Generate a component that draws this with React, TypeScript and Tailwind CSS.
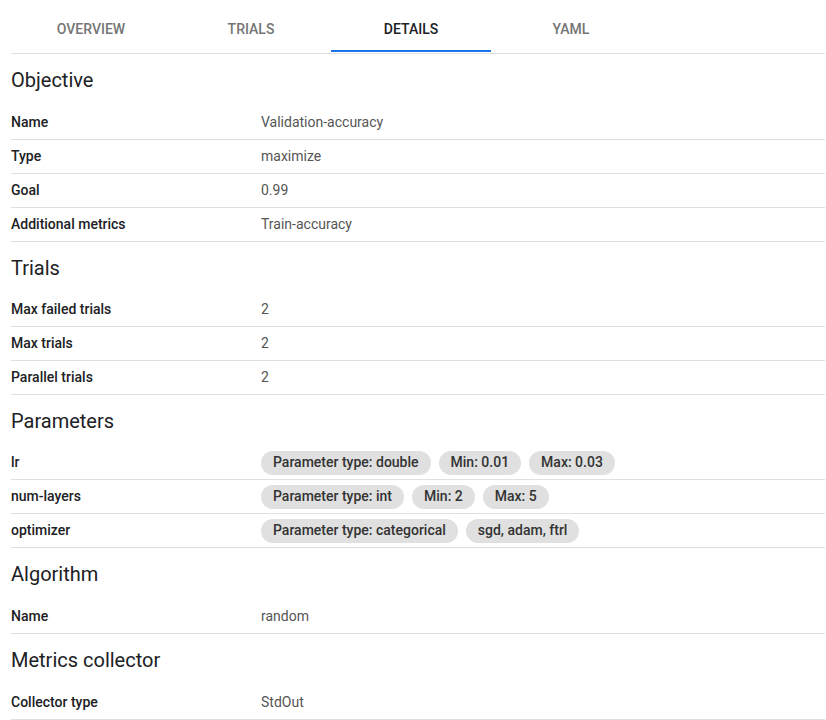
import React from "react";

type Row = { label: string; value?: string; chips?: string[] };
type Section = { title: string; h: string; rows: Row[] };

const sections: Section[] = [
  {
    title: "Objective",
    h: "h-[52px]",
    rows: [
      { label: "Name", value: "Validation-accuracy" },
      { label: "Type", value: "maximize" },
      { label: "Goal", value: "0.99" },
      { label: "Additional metrics", value: "Train-accuracy" },
    ],
  },
  {
    title: "Trials",
    h: "h-[51px]",
    rows: [
      { label: "Max failed trials", value: "2" },
      { label: "Max trials", value: "2" },
      { label: "Parallel trials", value: "2" },
    ],
  },
  {
    title: "Parameters",
    h: "h-[51px]",
    rows: [
      { label: "lr", chips: ["Parameter type: double", "Min: 0.01", "Max: 0.03"] },
      { label: "num-layers", chips: ["Parameter type: int", "Min: 2", "Max: 5"] },
      { label: "optimizer", chips: ["Parameter type: categorical", "sgd, adam, ftrl"] },
    ],
  },
  {
    title: "Algorithm",
    h: "h-[52px]",
    rows: [{ label: "Name", value: "random" }],
  },
  {
    title: "Metrics collector",
    h: "h-[52px]",
    rows: [{ label: "Collector type", value: "StdOut" }],
  },
];

const tabs = ["OVERVIEW", "TRIALS", "DETAILS", "YAML"];

export default function App() {
  return (
    <div
      className="w-[826px] h-[720px] overflow-hidden bg-white pl-[11px] pr-[1px]"
      style={{ fontFamily: "Roboto, 'Liberation Sans', sans-serif" }}
    >
      <div className="flex h-[54px] border-b border-[#e0e0e0]">
        {tabs.map((t) => {
          const active = t === "DETAILS";
          return (
            <div
              key={t}
              className={`relative w-[160px] flex items-center justify-center text-[14px] font-medium ${
                active ? "text-[#202124]" : "text-[#757575]"
              }`}
            >
              <span className="mt-[6px]">{t}</span>
              {active && (
                <div className="absolute left-0 right-0 bottom-[1px] h-[2px] bg-[#1a73e8]" />
              )}
            </div>
          );
        })}
      </div>
      {sections.map((s) => (
        <div key={s.title}>
          <div
            className={`${s.h} flex items-center text-[20px] text-[#202124] leading-none`}
          >
            {s.title}
          </div>
          {s.rows.map((r, i) => (
            <div
              key={i}
              className="h-[34px] flex items-center border-b border-[#e0e0e0]"
            >
              <div className="w-[250px] text-[14px] font-medium text-[#202124]">
                {r.label}
              </div>
              {r.value !== undefined && (
                <div className="text-[14px] text-[#555555]">{r.value}</div>
              )}
              {r.chips && (
                <div className="flex gap-[8px]">
                  {r.chips.map((c) => (
                    <span
                      key={c}
                      className="h-[24px] px-[12px] rounded-full bg-[#e0e0e0] flex items-center text-[14px] font-medium text-[#333333]"
                    >
                      {c}
                    </span>
                  ))}
                </div>
              )}
            </div>
          ))}
        </div>
      ))}
    </div>
  );
}
